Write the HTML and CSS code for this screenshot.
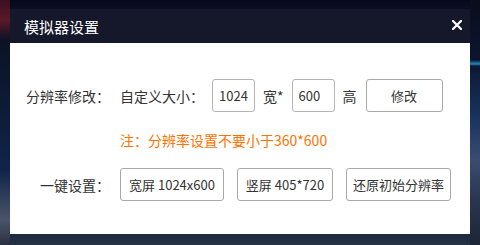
FILE: index.html
```html
<!DOCTYPE html>
<html lang="zh">
<head>
<meta charset="utf-8">
<link rel="stylesheet" href="styles.css">
</head>
<body>
<div class="dialog">
  <div class="header">
    <span class="title">模拟器设置</span>
    <svg class="close" width="10" height="10" viewBox="0 0 10 10"><path d="M1 1 L9 9 M9 1 L1 9" stroke="#fff" stroke-width="2.2" stroke-linecap="square"/></svg>
  </div>
  <div class="body">
    <div class="row row1">
      <span class="label">分辨率修改：</span>
      <div class="content">
        <span class="text">自定义大小：</span>
        <span class="input">1024</span>
        <span class="text">宽*</span>
        <span class="input">600</span>
        <span class="text">高</span>
        <span class="btn btn-edit">修改</span>
      </div>
    </div>
    <div class="row note-row">
      <span class="label"></span>
      <span class="note">注：分辨率设置不要小于360*600</span>
    </div>
    <div class="row row2">
      <span class="label">一键设置：</span>
      <div class="content buttons">
        <span class="btn b1">宽屏 1024x600</span>
        <span class="btn b2">竖屏 405*720</span>
        <span class="btn b3">还原初始分辨率</span>
      </div>
    </div>
  </div>
</div>
</body>
</html>
```
FILE: styles.css
```css
html, body { margin: 0; padding: 0; }
body {
  width: 480px;
  height: 245px;
  overflow: hidden;
  font-family: "Microsoft YaHei", "Noto Sans CJK SC", sans-serif;
  background:
    linear-gradient(180deg, rgba(0,0,0,0) 0, rgba(0,0,0,0) 60px, rgba(40,170,210,0.8) 64px, rgba(0,0,0,0) 66px, rgba(0,0,0,0) 100%) right top / 10px 245px no-repeat,
    linear-gradient(180deg, #0a0d1c 0, #0c1430 60px, #1a3560 120px, #3a4c70 160px, #2a3650 200px, #1c2536 245px) right top / 10px 245px no-repeat,
    linear-gradient(180deg, #3a1020 0, #5a1828 20px, #0b1224 40px, #0c1a34 100px, #10244a 170px, #4a5468 220px, #2a3040 245px) left top / 10px 245px no-repeat,
    linear-gradient(180deg, #06081a 0, #0b1027 10px, #1d2a40 235px, #253245 245px);
}
.dialog {
  margin: 9px 10px 0 10px;
  width: 460px;
  height: 225px;
  background: #fff;
  display: flex;
  flex-direction: column;
}
.header {
  height: 34px;
  flex: none;
  background: #15172b;
  display: flex;
  align-items: center;
  justify-content: space-between;
  padding: 0 8px 0 14px;
}
.title {
  color: #fff;
  font-size: 15px;
}
.close { display: block; margin-top: -2px; }
.body {
  padding-top: 36px;
  color: #333;
  font-size: 14px;
}
.row {
  display: grid;
  grid-template-columns: 100px 1fr;
  column-gap: 10px;
  align-items: center;
}
.label { text-align: right; white-space: nowrap; }
.content { display: flex; align-items: center; }
.text { white-space: nowrap; }
.input {
  box-sizing: border-box;
  width: 43px;
  height: 33px;
  border: 1px solid #b5b5b5;
  border-radius: 3px;
  line-height: 31px;
  padding-left: 6px;
  margin: 0 8px;
  font-size: 13px;
}
.btn {
  box-sizing: border-box;
  height: 33px;
  border: 1px solid #a8a8a8;
  border-radius: 3px;
  line-height: 31px;
  text-align: center;
  white-space: nowrap;
  background: #fff;
  font-size: 13px;
}
.btn-edit { width: 77px; margin-left: 9px; }
.note-row { margin-top: 17px; height: 22px; }
.note { color: #ff7200; font-size: 14px; }
.row2 { margin-top: 17px; }
.buttons { gap: 13px; }
.btn.b1 { width: 104px; }
.btn.b2 { width: 96px; }
.btn.b3 { width: 105px; }
```
